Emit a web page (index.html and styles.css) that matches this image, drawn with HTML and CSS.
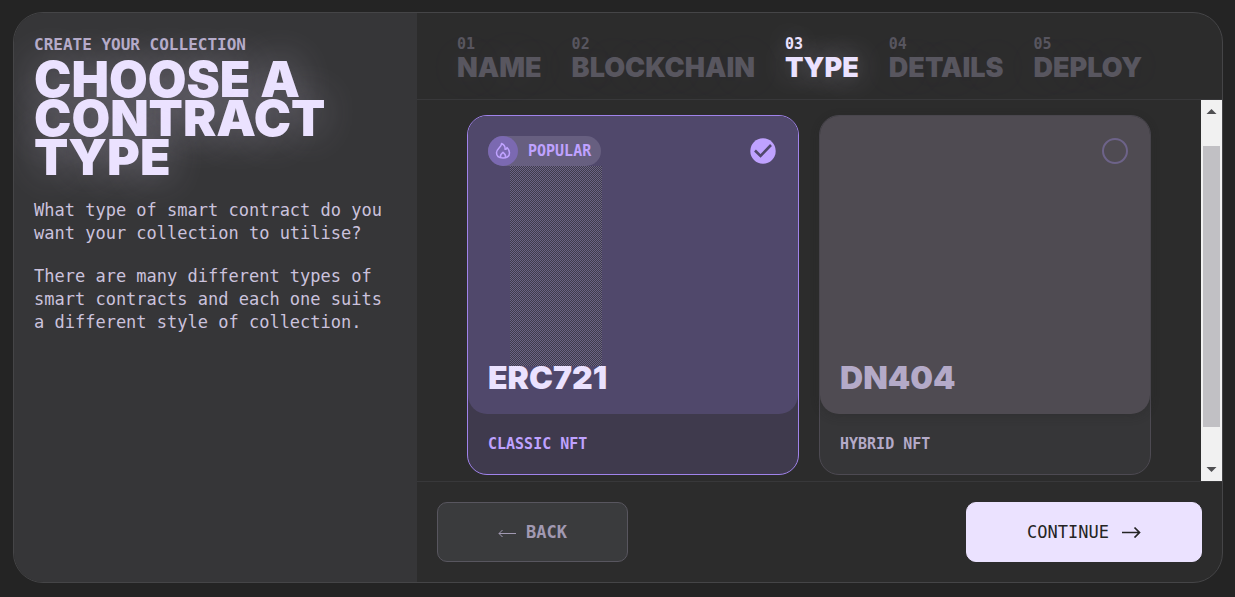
FILE: index.html
```html
<!DOCTYPE html>
<html lang="en">
<head>
<meta charset="utf-8">
<meta name="viewport" content="width=device-width, initial-scale=1">
<title>Create your collection</title>
<link rel="stylesheet" href="styles.css">
</head>
<body>
<main class="wizard">
  <section class="intro">
    <p class="eyebrow">CREATE YOUR COLLECTION</p>
    <h1 class="title">CHOOSE A CONTRACT TYPE</h1>
    <p class="copy">What type of smart contract do you want your collection to utilise?</p>
    <p class="copy">There are many different types of smart contracts and each one suits a different style of collection.</p>
  </section>
  <section class="panel">
    <ol class="steps">
      <li class="step"><span class="step-number">01</span><span class="step-name">NAME</span></li>
      <li class="step"><span class="step-number">02</span><span class="step-name">BLOCKCHAIN</span></li>
      <li class="step step-current" aria-current="step"><span class="step-number">03</span><span class="step-name">TYPE</span></li>
      <li class="step"><span class="step-number">04</span><span class="step-name">DETAILS</span></li>
      <li class="step"><span class="step-number">05</span><span class="step-name">DEPLOY</span></li>
    </ol>
    <div class="viewport">
      <div class="options">
        <label class="option option-selected">
          <span class="option-face">
            <span class="option-top">
              <span class="badge">
                <span class="badge-icon"><svg width="16" height="18" viewBox="0 0 16 18" fill="none" stroke="currentColor" stroke-width="1.500" stroke-linejoin="round" stroke-linecap="round"><path d="M6.500 1.500C7 5 1.500 6.500 1.500 10.800C1.500 14.200 4.300 16 8 16S14.500 14.200 14.500 10.800C14.500 8.500 13.500 7 12 5.500C11.800 6.700 11 7.400 10 7.200C10.300 5 8.800 2.500 6.500 1.500Z"/><path d="M5.500 15.300C4.800 12.800 6.500 11.500 8 10.300C9.500 11.500 11.200 12.800 10.500 15.300"/></svg></span>
                <span class="badge-text">POPULAR</span>
              </span>
              <input class="radio" type="radio" name="contract" value="erc721" aria-label="ERC721" checked>
              <svg class="check" width="26" height="26" viewBox="0 0 26 26"><circle cx="13" cy="13" r="12.700" fill="#bfa2ff"/><path d="M5 12.500L10.500 18L21 7" fill="none" stroke="#50486b" stroke-width="2.600"/></svg>
            </span>
            <span class="shade"></span>
            <span class="option-name">ERC721</span>
          </span>
          <span class="option-kind">CLASSIC NFT</span>
        </label>
        <label class="option">
          <span class="option-face">
            <span class="option-top">
              <input class="radio" type="radio" name="contract" value="dn404" aria-label="DN404">
            </span>
            <span class="option-name">DN404</span>
          </span>
          <span class="option-kind">HYBRID NFT</span>
        </label>
      </div>
      <div class="scrollbar" aria-hidden="true">
        <svg class="scroll-arrow" width="21" height="21" viewBox="0 0 21 21"><path d="M5.500 14h10l-5-5z" fill="#4f4f51"/></svg>
        <div class="scroll-track"><div class="scroll-thumb"></div></div>
        <svg class="scroll-arrow" width="21" height="21" viewBox="0 0 21 21"><path d="M5.500 7h10l-5 5z" fill="#4f4f51"/></svg>
      </div>
    </div>
    <footer class="actions">
      <button class="button button-back" type="button"><svg width="18" height="12" viewBox="0 0 18 12" fill="none" stroke="currentColor"><path d="M18 7.500H1M4.500 4L1 7.500L4.500 11"/></svg>BACK</button>
      <button class="button button-next" type="button">CONTINUE<svg width="20" height="12" viewBox="0 0 20 12" fill="none" stroke="currentColor" stroke-width="1.700"><path d="M1 6.500h17M13.500 1.500l5 5l-5 5"/></svg></button>
    </footer>
  </section>
</main>
</body>
</html>
```
FILE: styles.css
```css
* {
  box-sizing: border-box;
}

body {
  margin: 0;
  min-height: 100vh;
  padding: 12px 12px 14px 13px;
  display: flex;
  background: #242424;
  color: #ebe2ff;
  font-family: "DejaVu Sans Mono", "Liberation Mono", monospace;
}

.wizard {
  flex: 1;
  display: flex;
  border: 1px solid #454547;
  border-radius: 30px;
  background: #2c2c2c;
  overflow: hidden;
}

.intro {
  flex: 0 0 403px;
  padding: 22px 20px 20px;
  background: #363638;
}

.eyebrow {
  margin: 0;
  font-size: 16px;
  font-weight: 700;
  line-height: 20px;
  color: #b4aac8;
}

.title {
  margin: 5px 0 22px;
  max-width: 340px;
  font-family: Inter, "Open Sans", sans-serif;
  font-size: 50px;
  font-weight: 900;
  line-height: 39px;
  text-shadow: 0 0 40px rgba(235, 226, 255, 0.4);
}

.copy {
  margin: 0 0 20px;
  font-size: 17px;
  line-height: 23px;
  color: #cbc2dd;
}

.panel {
  flex: 1;
  min-width: 0;
  display: flex;
  flex-direction: column;
}

.steps {
  display: flex;
  gap: 30px;
  margin: 0;
  padding: 22px 40px 17px;
  border-bottom: 1px solid #38383a;
  list-style: none;
}

.step {
  display: flex;
  flex-direction: column;
  color: #58565f;
  text-shadow: 0 0 40px rgba(235, 226, 255, 0.1);
}

.step-current {
  color: #ebe2ff;
  text-shadow: 0 0 30px rgba(235, 226, 255, 0.4);
}

.step-number {
  font-size: 15px;
  font-weight: 700;
  line-height: 18px;
}

.step-name {
  font-family: Inter, "Open Sans", sans-serif;
  font-size: 27px;
  font-weight: 900;
  line-height: 29px;
}

.viewport {
  flex: 1;
  display: flex;
}

.options {
  flex: 1;
  display: grid;
  grid-template-columns: 1fr 1fr;
  gap: 20px;
  padding: 15px 50px 6px;
}

.option {
  display: flex;
  flex-direction: column;
  border: 1px solid #4d4a52;
  border-radius: 20px;
  background: #363638;
  color: #b4aac8;
}

.option-selected {
  border-color: #a083eb;
  background: #3f3a4d;
  color: #bfa2ff;
}

.option-face {
  flex: 1;
  display: flex;
  flex-direction: column;
  padding: 20px;
  border-radius: 19px;
  background: #4f4b52;
  box-shadow: 0 2px 10px rgba(36, 36, 36, 0.3);
}

.option-selected .option-face {
  background: #50486b;
  box-shadow: none;
}

.option-top {
  display: flex;
  align-items: center;
  justify-content: flex-end;
  min-height: 30px;
  padding-right: 2px;
}

.badge {
  display: flex;
  align-items: center;
  gap: 10px;
  height: 30px;
  margin-right: auto;
  padding-right: 10px;
  border-radius: 15px;
  background: #675f80;
}

.badge-icon {
  display: flex;
  align-items: center;
  justify-content: center;
  width: 30px;
  height: 30px;
  border-radius: 50%;
  background: #7b69b1;
}

.badge-text {
  font-size: 15px;
  font-weight: 700;
}

.radio {
  appearance: none;
  width: 26px;
  height: 26px;
  margin: 0;
  border: 2px solid #6d6389;
  border-radius: 50%;
}

.option-selected .radio {
  width: 0;
  border: 0;
}

.shade {
  flex: 1;
  width: 92px;
  margin: 0 0 -4px 22px;
  background: repeating-conic-gradient(#3f3b4c 0% 25%, #6b6484 0% 50%) 0 0 / 2px 2px;
}

.option-name {
  margin-top: auto;
  font-family: Inter, "Open Sans", sans-serif;
  font-size: 32px;
  font-weight: 900;
  line-height: 32px;
}

.option-selected .option-name {
  color: #ebe2ff;
}

.option-kind {
  padding: 20px;
  font-size: 15px;
  font-weight: 700;
  line-height: 20px;
}

.scrollbar {
  width: 21px;
  display: flex;
  flex-direction: column;
  background: #f1f1f1;
}

.scroll-track {
  flex: 1;
  padding: 25px 2px 33px;
  display: flex;
}

.scroll-thumb {
  flex: 1;
  background: #c1c0c4;
}

.actions {
  display: flex;
  justify-content: space-between;
  padding: 20px;
  border-top: 1px solid #38383a;
}

.button {
  display: flex;
  align-items: center;
  justify-content: center;
  gap: 10px;
  height: 60px;
  padding: 0 60px;
  border: 1px solid #58565f;
  border-radius: 10px;
  background: #3a3b3d;
  color: #a199b2;
  font-family: inherit;
  font-size: 17px;
}

.button-back {
  font-weight: 700;
}

.button-next {
  gap: 12px;
  border-color: #ebe2ff;
  background: #ebe2ff;
  color: #242424;
}
```
